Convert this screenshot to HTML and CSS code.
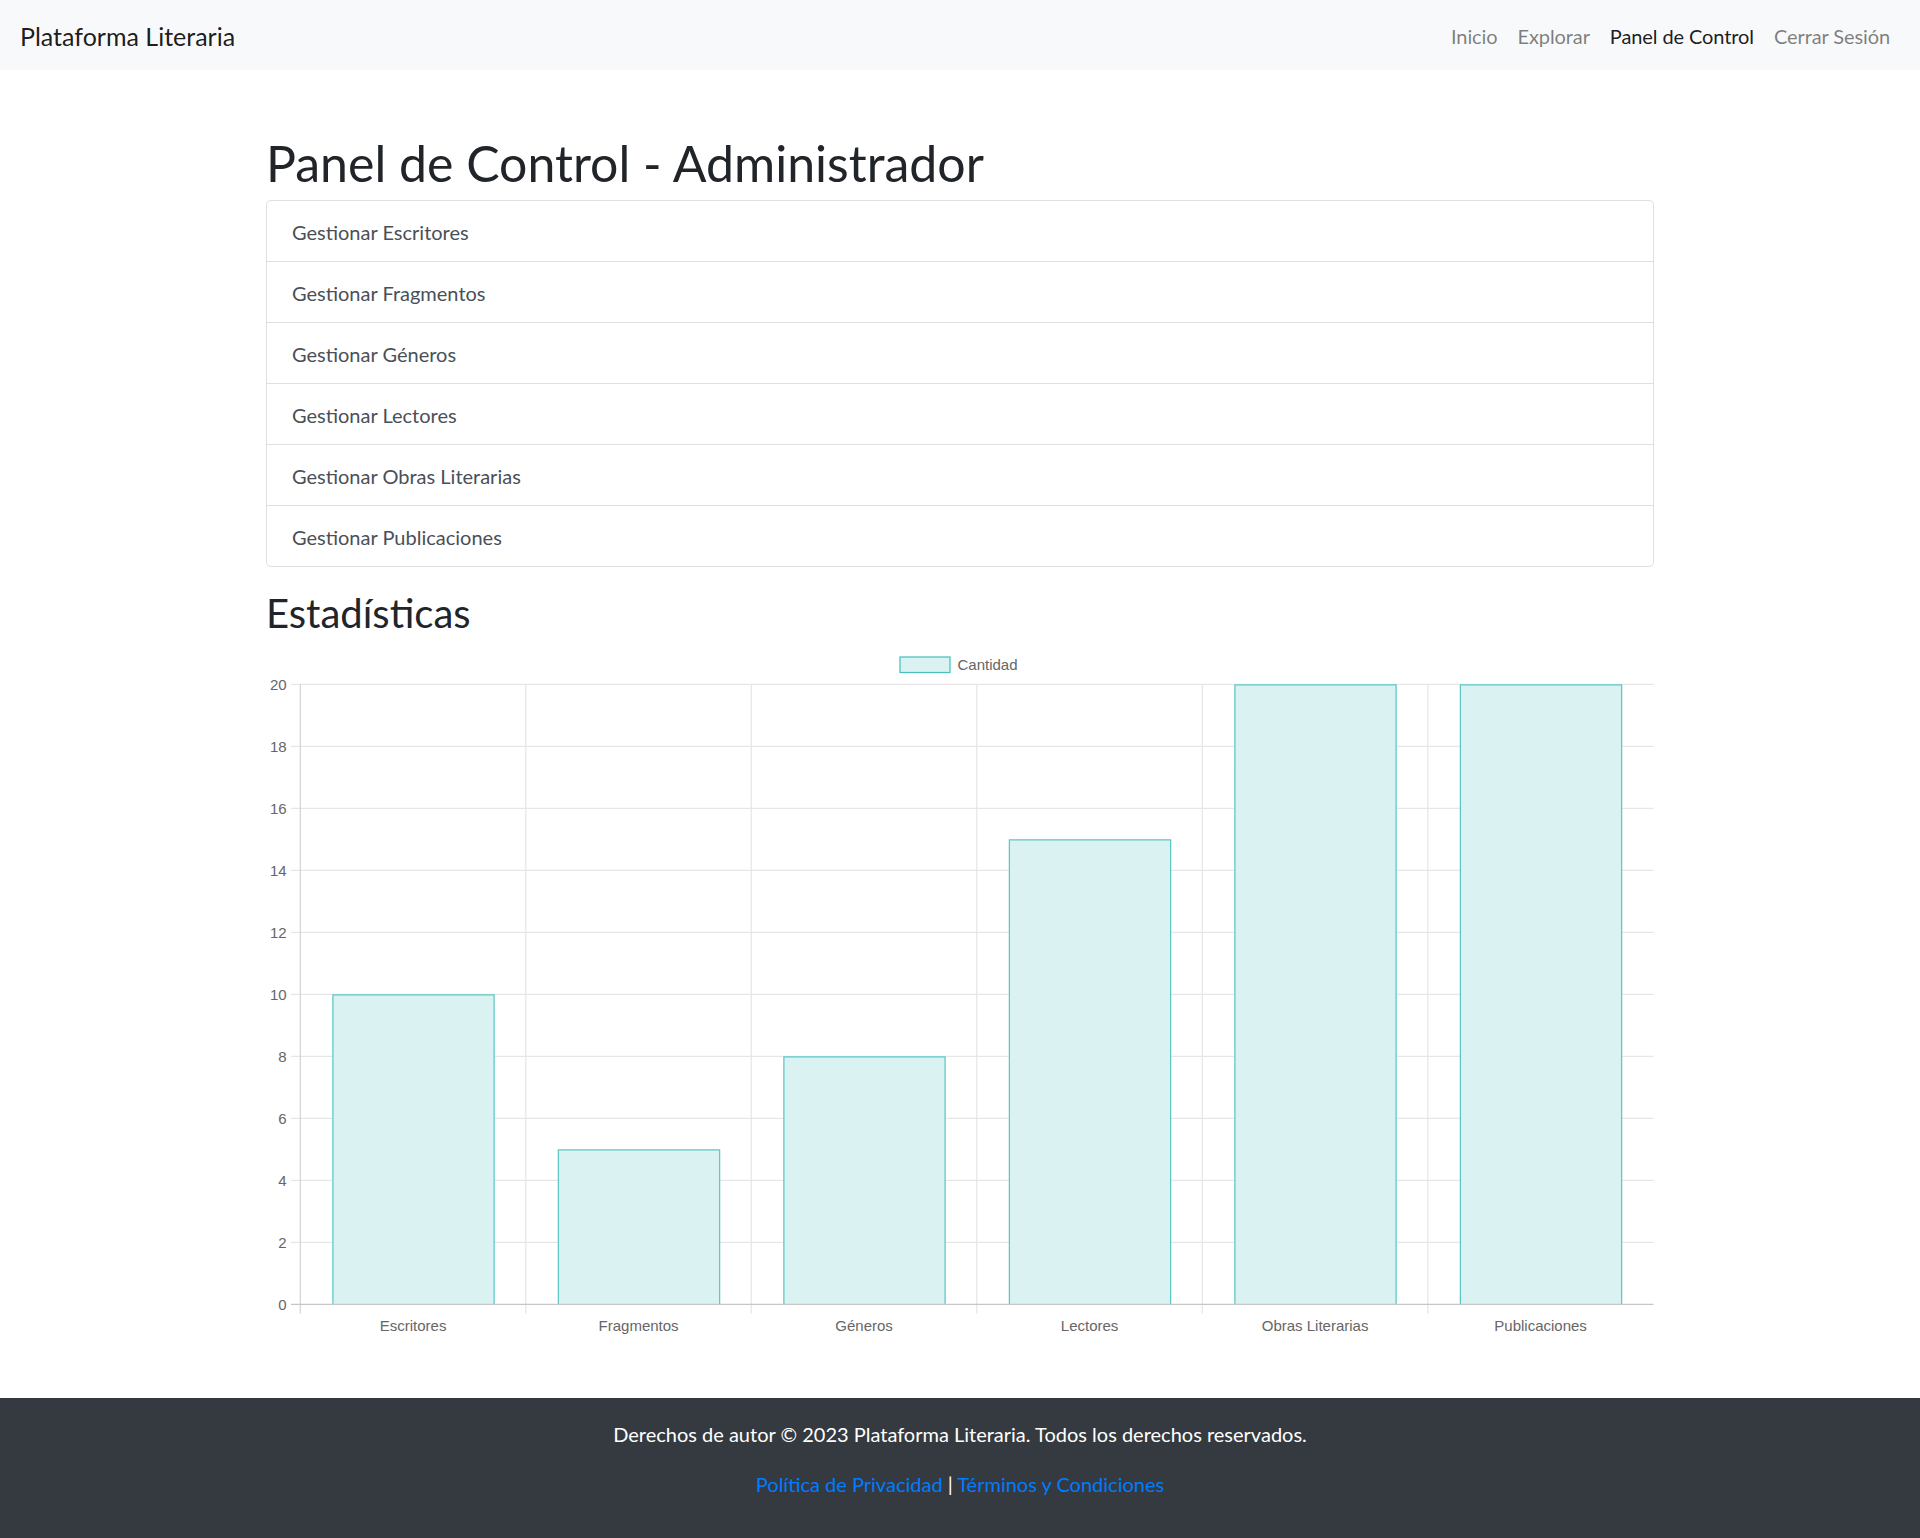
FILE: index.html
```html
<!DOCTYPE html>
<html lang="es">
<head>
<meta charset="utf-8">
<title>Panel de Control - Administrador</title>
<link rel="stylesheet" href="styles.css">
</head>
<body>
<nav class="navbar">
  <a class="brand" href="#">Plataforma Literaria</a>
  <ul class="nav">
    <li><a class="nav-link" href="#">Inicio</a></li>
    <li><a class="nav-link" href="#">Explorar</a></li>
    <li><a class="nav-link active" href="#">Panel de Control</a></li>
    <li><a class="nav-link" href="#">Cerrar Sesión</a></li>
  </ul>
</nav>

<main class="container">
  <h1 class="title">Panel de Control - Administrador</h1>
  <div class="list-group">
    <a class="list-item" href="#">Gestionar Escritores</a>
    <a class="list-item" href="#">Gestionar Fragmentos</a>
    <a class="list-item" href="#">Gestionar Géneros</a>
    <a class="list-item" href="#">Gestionar Lectores</a>
    <a class="list-item" href="#">Gestionar Obras Literarias</a>
    <a class="list-item" href="#">Gestionar Publicaciones</a>
  </div>

  <h2 class="subtitle">Estadísticas</h2>

  <svg class="chart" width="1388" height="694" viewBox="266 644 1388 694" xmlns="http://www.w3.org/2000/svg">
    <!-- legend -->
    <rect x="900" y="657" width="50" height="15.5" fill="#dbf2f2" stroke="#4bc0c0" stroke-width="1.25"/>
    <text class="tick" x="957.5" y="670">Cantidad</text>

    <!-- horizontal grid -->
    <g stroke="#e6e6e6" stroke-width="1.25">
      <line x1="291" y1="684.3" x2="1653.5" y2="684.3"/>
      <line x1="291" y1="746.3" x2="1653.5" y2="746.3"/>
      <line x1="291" y1="808.3" x2="1653.5" y2="808.3"/>
      <line x1="291" y1="870.3" x2="1653.5" y2="870.3"/>
      <line x1="291" y1="932.3" x2="1653.5" y2="932.3"/>
      <line x1="291" y1="994.3" x2="1653.5" y2="994.3"/>
      <line x1="291" y1="1056.3" x2="1653.5" y2="1056.3"/>
      <line x1="291" y1="1118.3" x2="1653.5" y2="1118.3"/>
      <line x1="291" y1="1180.3" x2="1653.5" y2="1180.3"/>
      <line x1="291" y1="1242.3" x2="1653.5" y2="1242.3"/>
    </g>
    <!-- vertical grid -->
    <g stroke="#e6e6e6" stroke-width="1.25">
      <line x1="525.8" y1="684.3" x2="525.8" y2="1313.5"/>
      <line x1="751.3" y1="684.3" x2="751.3" y2="1313.5"/>
      <line x1="976.8" y1="684.3" x2="976.8" y2="1313.5"/>
      <line x1="1202.3" y1="684.3" x2="1202.3" y2="1313.5"/>
      <line x1="1427.8" y1="684.3" x2="1427.8" y2="1313.5"/>
    </g>

    <!-- bars -->
    <g fill="#dbf2f2">
      <rect x="332.3" y="994.3" width="162.4" height="310"/>
      <rect x="557.8" y="1149.3" width="162.4" height="155"/>
      <rect x="783.3" y="1056.3" width="162.4" height="248"/>
      <rect x="1008.8" y="839.3" width="162.4" height="465"/>
      <rect x="1234.3" y="684.3" width="162.4" height="620"/>
      <rect x="1459.8" y="684.3" width="162.4" height="620"/>
    </g>
    <g fill="none" stroke="#4bc0c0" stroke-width="1.25" opacity="0.85">
      <path d="M332.9 1304.3 V994.9 H494.1 V1304.3"/>
      <path d="M558.4 1304.3 V1149.9 H719.6 V1304.3"/>
      <path d="M783.9 1304.3 V1056.9 H945.1 V1304.3"/>
      <path d="M1009.4 1304.3 V839.9 H1170.6 V1304.3"/>
      <path d="M1234.9 1304.3 V684.9 H1396.1 V1304.3"/>
      <path d="M1460.4 1304.3 V684.9 H1621.6 V1304.3"/>
    </g>

    <!-- axes -->
    <line x1="300.3" y1="684.3" x2="300.3" y2="1313.5" stroke="#d4d4d4" stroke-width="1.25"/>
    <line x1="291" y1="1304.3" x2="1653.5" y2="1304.3" stroke="#c6c6c6" stroke-width="1.25"/>

    <!-- y ticks -->
    <g class="tick" text-anchor="end">
      <text x="286.7" y="689.5">20</text>
      <text x="286.7" y="751.5">18</text>
      <text x="286.7" y="813.5">16</text>
      <text x="286.7" y="875.5">14</text>
      <text x="286.7" y="937.5">12</text>
      <text x="286.7" y="999.5">10</text>
      <text x="286.7" y="1061.5">8</text>
      <text x="286.7" y="1123.5">6</text>
      <text x="286.7" y="1185.5">4</text>
      <text x="286.7" y="1247.5">2</text>
      <text x="286.7" y="1309.5">0</text>
    </g>
    <!-- x ticks -->
    <g class="tick" text-anchor="middle">
      <text x="413.1" y="1331">Escritores</text>
      <text x="638.6" y="1331">Fragmentos</text>
      <text x="864.1" y="1331">Géneros</text>
      <text x="1089.6" y="1331">Lectores</text>
      <text x="1315.1" y="1331">Obras Literarias</text>
      <text x="1540.6" y="1331">Publicaciones</text>
    </g>
  </svg>
</main>

<footer class="footer">
  <p>Derechos de autor © 2023 Plataforma Literaria. Todos los derechos reservados.</p>
  <p><a href="#">Política de Privacidad</a> | <a href="#">Términos y Condiciones</a></p>
</footer>
</body>
</html>
```

FILE: styles.css
```css
* {
  box-sizing: border-box;
}

html, body {
  margin: 0;
  padding: 0;
}

body {
  font-family: "Segoe UI", Lato, "Noto Sans", sans-serif;
  font-size: 20px;
  line-height: 1.5;
  color: #212529;
  background: #fff;
}

a {
  text-decoration: none;
}

/* Navbar */
.navbar {
  display: flex;
  align-items: center;
  justify-content: space-between;
  height: 70px;
  padding: 12px 20px 8px;
  background: #f8f9fa;
}

.brand {
  font-size: 25px;
  line-height: 37.5px;
  color: rgba(0, 0, 0, 0.9);
}

.nav {
  display: flex;
  margin: -2px 0 0;
  padding: 0;
  list-style: none;
}

.nav-link {
  display: block;
  padding: 10px;
  line-height: 30px;
  letter-spacing: -0.1px;
  color: rgba(0, 0, 0, 0.5);
}

.nav-link.active {
  color: rgba(0, 0, 0, 0.9);
}

/* Main */
.container {
  width: 1388px;
  margin: 0 auto;
  padding-top: 60px;
}

.title {
  margin: 0 0 7px;
  padding-top: 3px;
  font-size: 50px;
  font-weight: 400;
  line-height: 60px;
  color: #212529;
}

.list-group {
  display: flex;
  flex-direction: column;
  border: 1px solid #dfdfdf;
  border-radius: 5px;
}

.list-item {
  display: block;
  padding: 16px 25px 14px;
  line-height: 30px;
  color: #495057;
}

.list-item + .list-item {
  border-top: 1px solid #dfdfdf;
}

.subtitle {
  margin: 22px 0 7px;
  font-size: 40px;
  font-weight: 400;
  line-height: 48px;
  color: #212529;
}

.chart {
  display: block;
}

.tick {
  font-family: "Liberation Sans", Arial, sans-serif;
  font-size: 15px;
  fill: #666;
}

/* Footer */
.footer {
  margin-top: 60px;
  padding: 21px 0 19px;
  background: #343a40;
  color: #fff;
  text-align: center;
}

.footer p {
  margin: 0 0 20px;
  line-height: 30px;
}

.footer a {
  color: #007bff;
}
```
